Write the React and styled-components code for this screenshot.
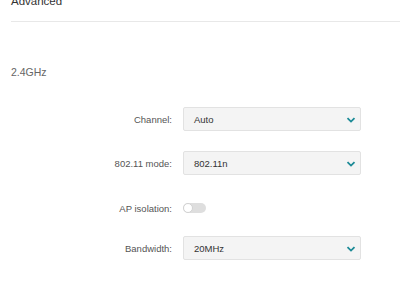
import React, { useState } from 'react'
import styled, { createGlobalStyle } from 'styled-components'

const GlobalStyle = createGlobalStyle`
  html, body {
    margin: 0;
    padding: 0;
    background: #ffffff;
    overflow: hidden;
  }
  body {
    font-family: "Liberation Sans", Arial, sans-serif;
  }
`

const Page = styled.div`
  width: 400px;
  height: 285px;
  padding-left: 11px;
  box-sizing: border-box;
  overflow: hidden;
`

const Title = styled.div`
  margin-top: -6px;
  height: 14px;
  line-height: 14px;
  padding-bottom: 13px;
  border-bottom: 1px solid #e8e8e8;
  font-size: 11.5px;
  color: #333;
`

const Section = styled.div`
  margin-top: 44px;
  font-size: 10.5px;
  line-height: 12px;
  color: #666;
`

const Form = styled.div`
  margin-top: 29px;
  display: flex;
  flex-direction: column;
`

const Row = styled.div`
  display: flex;
  align-items: center;
  height: ${p => p.$h || 24}px;
  margin-top: ${p => p.$gap || 0}px;
`

const Label = styled.div`
  width: 161px;
  text-align: right;
  padding-right: 11px;
  font-size: 9.5px;
  color: #555;
`

const Select = styled.div`
  width: 178px;
  height: 24px;
  box-sizing: border-box;
  border: 1px solid #e2e2e2;
  border-radius: 2px;
  background: #f4f4f4;
  display: flex;
  align-items: center;
  justify-content: space-between;
  padding: 0 4px 0 10px;
  font-size: 9.5px;
  color: #333;
`

const Chevron = styled.svg`
  width: 10px;
  height: 10px;
  margin-top: 1px;
`

const Toggle = styled.button`
  width: 23px;
  height: 10px;
  border-radius: 5px;
  border: none;
  padding: 0;
  background: #dedede;
  position: relative;
  cursor: pointer;

  &::after {
    content: '';
    position: absolute;
    top: 0;
    left: ${p => (p.$on ? '13px' : '0')};
    width: 10px;
    height: 10px;
    border-radius: 50%;
    background: #fff;
    box-sizing: border-box;
    border: 1px solid #d2d2d2;
  }
`

const Dropdown = ({ value }) => (
  <Select>
    <span>{value}</span>
    <Chevron viewBox="0 0 10 10">
      <path d="M1.5 3.2 L5 6.6 L8.5 3.2" fill="none" stroke="#1b8a96" strokeWidth="1.8" />
    </Chevron>
  </Select>
)

const App = () => {
  const [iso, setIso] = useState(false)
  return (
    <Page>
      <GlobalStyle />
      <Title>Advanced</Title>
      <Section>2.4GHz</Section>
      <Form>
        <Row>
          <Label>Channel:</Label>
          <Dropdown value="Auto" />
        </Row>
        <Row $gap={20}>
          <Label>802.11 mode:</Label>
          <Dropdown value="802.11n" />
        </Row>
        <Row $gap={22} $h={22}>
          <Label>AP isolation:</Label>
          <Toggle $on={iso} onClick={() => setIso(!iso)} />
        </Row>
        <Row $gap={17}>
          <Label>Bandwidth:</Label>
          <Dropdown value="20MHz" />
        </Row>
      </Form>
    </Page>
  )
}

export default App
